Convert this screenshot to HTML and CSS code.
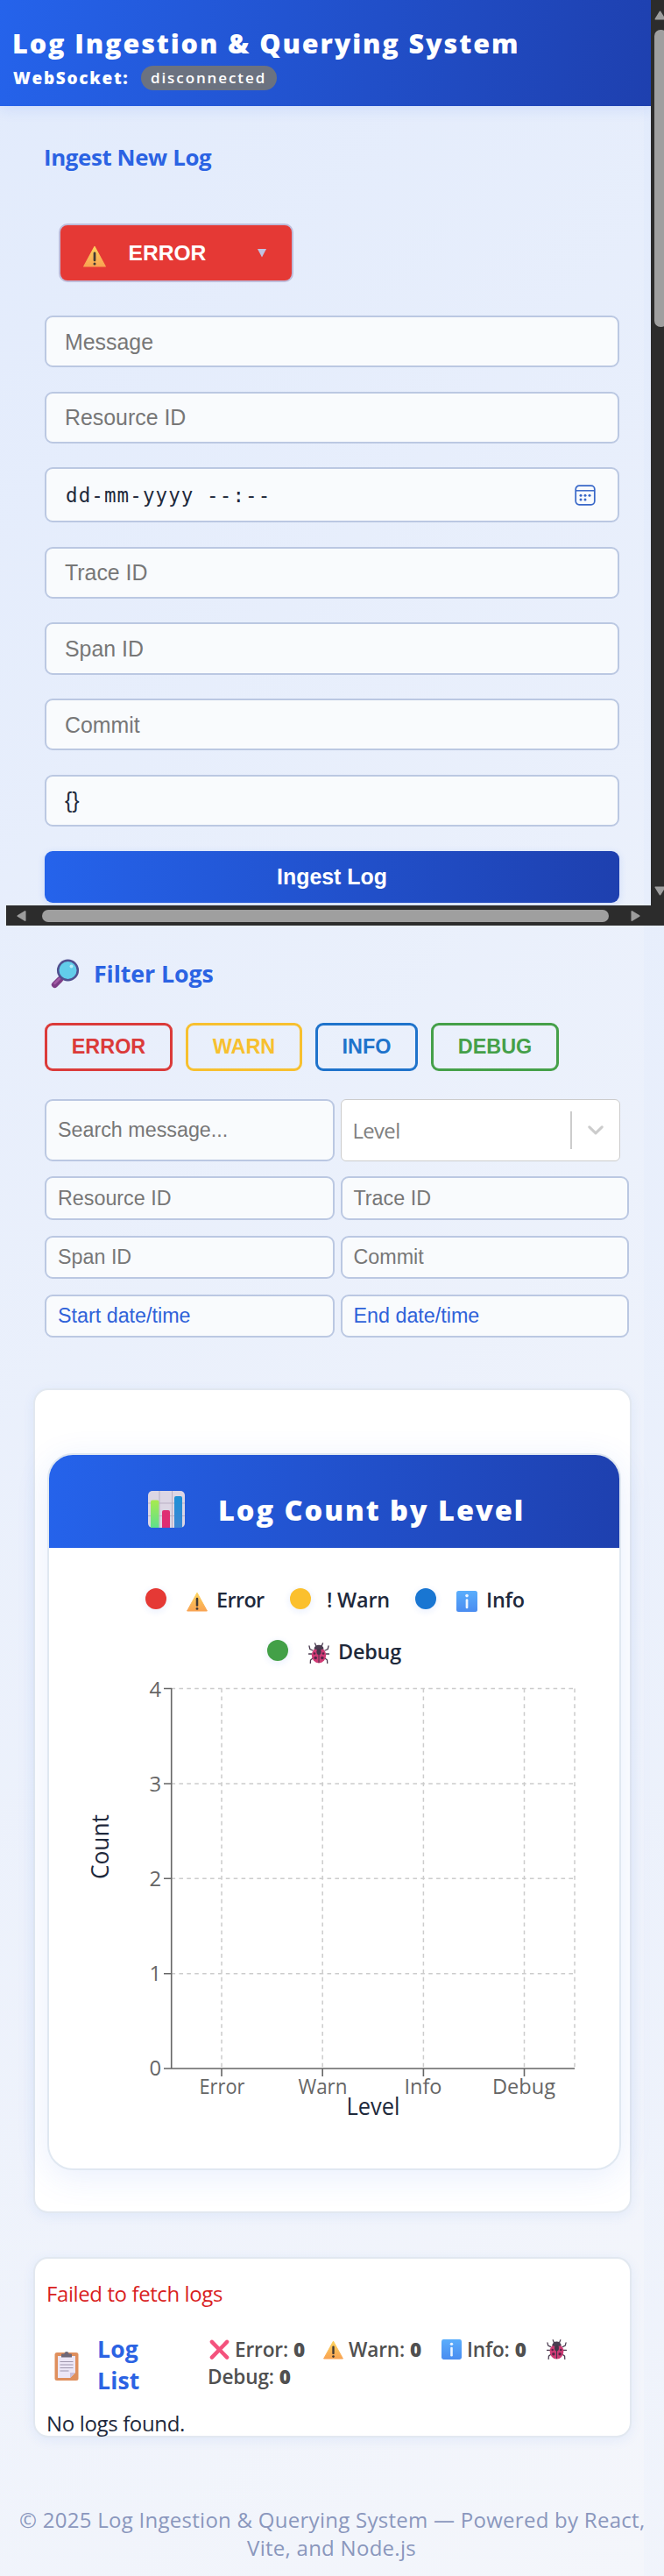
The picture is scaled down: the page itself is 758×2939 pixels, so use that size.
FILE: index.html
```html
<!DOCTYPE html>
<html lang="en">
<head>
<meta charset="utf-8">
<title>Log Ingestion &amp; Querying System</title>
<link rel="stylesheet" href="styles.css">
</head>
<body>
<svg class="defs" width="0" height="0">
  <defs>
    <linearGradient id="amber" x1="0" y1="0" x2="0" y2="1"><stop offset="0" stop-color="#fcd35c"/><stop offset="1" stop-color="#f9a352"/></linearGradient>
    <linearGradient id="green" x1="0" y1="0" x2="0" y2="1"><stop offset="0" stop-color="#a8ea4e"/><stop offset="1" stop-color="#5fe08c"/></linearGradient>
    <linearGradient id="sky" x1="0" y1="0" x2="0" y2="1"><stop offset="0" stop-color="#1d90d6"/><stop offset="1" stop-color="#3c86d4"/></linearGradient>
    <linearGradient id="info" x1="0" y1="0" x2="0" y2="1"><stop offset="0" stop-color="#5aaefc"/><stop offset="1" stop-color="#4a8cf0"/></linearGradient>
    <symbol id="i-warning" viewBox="0 0 24 24"><path d="M12 2.2 23.4 23H.6Z" fill="url(#amber)" stroke="url(#amber)" stroke-linejoin="round"/><path d="M12 9v7.6" stroke="#423a35" stroke-width="2.5" stroke-linecap="round"/><circle cx="12" cy="20.4" r="1.4" fill="#423a35"/></symbol>
    <symbol id="i-info" viewBox="0 0 24 24"><rect width="24" height="24" rx="2.5" fill="url(#info)"/><path d="M12 10.5v8.5" stroke="#edf5ff" stroke-width="2.7" stroke-linecap="round"/><circle cx="12" cy="5.6" r="1.8" fill="#edf5ff"/></symbol>
    <symbol id="i-bug" viewBox="0 0 24 24"><path d="M5 9 1.8 7.5 1 4M4 13H.5M5 18l-2.5 2-.2 3.5M19 9l3.200-1.500.8-3.500M20 13h3.500M19 18l2.500 2 .2 3.500M9 4.500 7.500.8M15 4.500 16.500.8" fill="none" stroke="#4a3c50" stroke-width="1.3" stroke-linecap="round"/><ellipse cx="12" cy="14.500" rx="8.200" ry="9" fill="#cf3a74"/><path d="M6.500 7.500a5.500 4.800 0 0 1 11 0Q12 8.800 6.500 7.500Z" fill="#4a3c50"/><ellipse cx="12" cy="10.500" rx="2.600" ry="3.600" fill="#42364a"/><path d="M12 9v14" stroke="#42364a" stroke-width="1"/><circle cx="7" cy="12.500" r="1.300" fill="#5b2449"/><circle cx="17" cy="12.500" r="1.300" fill="#5b2449"/><circle cx="8.200" cy="17.500" r="1.800" fill="#5b2449"/><circle cx="15.800" cy="17.500" r="1.800" fill="#5b2449"/></symbol>
    <symbol id="i-search" viewBox="0 0 34 34"><path d="m11.500 23.500-6 6" stroke="#7d3d86" stroke-width="7.200" stroke-linecap="round"/><path d="m11 22.500-5.500 5.500" stroke="#a15aa3" stroke-width="2.500" stroke-linecap="round"/><circle cx="20.500" cy="13" r="11.300" fill="#62cdea" stroke="#50508f" stroke-width="2.500"/><circle cx="24.500" cy="8.500" r="2" fill="#b5ecf8"/></symbol>
    <symbol id="i-chart" viewBox="0 0 42 42"><rect width="42" height="42" rx="5" fill="#dcd6e4"/><path d="M13 0v42M27.500 0v42M0 14h42M0 28.500h42" stroke="#b9b0c4" stroke-width="1"/><path d="M3 42V12.500a2 2 0 0 1 2-2h5.500a2 2 0 0 1 2 2V42Z" fill="url(#green)"/><path d="M16 42V24a2 2 0 0 1 2-2h5a2 2 0 0 1 2 2v18Z" fill="#df2d72"/><path d="M30 42V8a2 2 0 0 1 2-2h5a2 2 0 0 1 2 2v34Z" fill="url(#sky)"/></symbol>
    <symbol id="i-clipboard" viewBox="0 0 28 34"><rect x=".5" y="2" width="27" height="32" rx="2.500" fill="#df8f5d"/><path d="M4 6h20v19l-6 6H4Z" fill="#ece6f6"/><path d="m24 25-6 6v-6Z" fill="#c9bfdd"/><path d="M6.500 12.500h15M6.500 16h15M6.500 19.500h15M6.500 23h10" stroke="#9e96ad" stroke-width="1.200"/><path d="M8 7.500V4.500a1 1 0 0 1 1-1h2.500a2.500 2.500 0 0 1 5 0H19a1 1 0 0 1 1 1v3Z" fill="#6f6878"/></symbol>
    <symbol id="i-cross" viewBox="0 0 24 24"><path d="m3 3 18 18.500M21 3 3 21.500" stroke="#f4527d" stroke-width="4.600" stroke-linecap="round"/></symbol>
  </defs>
</svg>

<header class="header">
  <h1 class="title">Log Ingestion &amp; Querying System</h1>
  <div class="socket"><span class="socket-label">WebSocket:</span><span class="badge">disconnected</span></div>
</header>

<main class="main">
  <section class="ingest">
    <h2 class="heading heading-ingest">Ingest New Log</h2>
    <div class="level-select">
      <svg class="level-icon"><use href="#i-warning"/></svg>
      <span>ERROR</span>
      <svg class="level-caret" viewBox="0 0 10 10"><path d="M0 0h10L5 9.500Z" fill="#bfc3e2"/></svg>
    </div>
    <div class="form">
      <div class="field">Message</div>
      <div class="field">Resource ID</div>
      <div class="field date"><span>dd-mm-yyyy --:--</span>
        <svg class="calendar" viewBox="0 0 24 24"><rect x="1.200" y="1.200" width="21.600" height="21.600" rx="4" fill="none" stroke="#3867c8" stroke-width="1.700"/><path d="M1.500 6.800h21" stroke="#3867c8" stroke-width="1.500"/><g fill="#3867c8"><circle cx="7" cy="12.300" r="1.500"/><circle cx="12" cy="12.300" r="1.500"/><circle cx="17" cy="12.300" r="1.500"/><circle cx="7" cy="17" r="1.500"/><circle cx="12" cy="17" r="1.500"/></g></svg>
      </div>
      <div class="field">Trace ID</div>
      <div class="field">Span ID</div>
      <div class="field">Commit</div>
      <div class="field filled">{}</div>
      <div class="submit">Ingest Log</div>
    </div>
  </section>

  <section class="filters">
    <h2 class="heading heading-filter"><svg class="search-icon"><use href="#i-search"/></svg>Filter Logs</h2>
    <div class="levels">
      <span class="chip error">ERROR</span><span class="chip warn">WARN</span><span class="chip info">INFO</span><span class="chip debug">DEBUG</span>
    </div>
    <div class="filter-grid">
      <div class="field small">Search message...</div>
      <div class="dropdown"><span>Level</span><i class="divider"></i><svg class="chevron" viewBox="0 0 18 11"><path d="m1.800 1.800 7.200 7 7.200-7" fill="none" stroke="#ccc" stroke-width="3" stroke-linecap="round" stroke-linejoin="round"/></svg></div>
      <div class="field small">Resource ID</div><div class="field small">Trace ID</div>
      <div class="field small">Span ID</div><div class="field small">Commit</div>
      <div class="field small blue">Start date/time</div><div class="field small blue">End date/time</div>
    </div>
  </section>

  <section class="card chart-card">
    <div class="chart-box">
      <div class="chart-head"><svg class="chart-icon"><use href="#i-chart"/></svg><span>Log Count by Level</span></div>
      <div class="legend">
        <span class="item w1"><i class="dot d-error"></i><svg class="emoji"><use href="#i-warning"/></svg><span class="tight">Error</span></span>
        <span class="item w2"><i class="dot d-warn"></i><span>! Warn</span></span>
        <span class="item w3"><i class="dot d-info"></i><svg class="emoji"><use href="#i-info"/></svg><span>Info</span></span>
      </div>
      <div class="legend second">
        <span class="item"><i class="dot d-debug"></i><svg class="emoji"><use href="#i-bug"/></svg><span>Debug</span></span>
      </div>
      <svg class="plot" viewBox="56 1910 650 530" width="650" height="530">
        <g stroke="#ccc" stroke-width="1.500" stroke-dasharray="4.600 4.300" fill="none">
          <path d="M195.500 1926.500H656M195.500 2035H656M195.500 2143.300H656M195.500 2251.700H656"/>
          <path d="M253 1926.500V2360M368.200 1926.500V2360M483.400 1926.500V2360M598.500 1926.500V2360M656 1926.500V2360"/>
        </g>
        <path d="M195.700 1926V2360M187 2360H656M187 1926.500H196M187 2035H196M187 2143.300H196M187 2251.700H196M253 2360v9M368.200 2360v9M483.400 2360v9M598.500 2360v9" stroke="#666" stroke-width="1.600" fill="none"/>
        <g class="tick" text-anchor="end"><text x="184" y="1936">4</text><text x="184" y="2043.500">3</text><text x="184" y="2152">2</text><text x="184" y="2260">1</text><text x="184" y="2368">0</text></g>
        <g class="tick" text-anchor="middle">
          <text x="253.500" y="2389" textLength="52" lengthAdjust="spacingAndGlyphs">Error</text>
          <text x="368.500" y="2389" textLength="56" lengthAdjust="spacingAndGlyphs">Warn</text>
          <text x="483" y="2389" textLength="43" lengthAdjust="spacingAndGlyphs">Info</text>
          <text x="598" y="2389" textLength="72" lengthAdjust="spacingAndGlyphs">Debug</text>
        </g>
        <g class="axis" text-anchor="middle">
          <text x="426" y="2412.500" textLength="61" lengthAdjust="spacingAndGlyphs">Level</text>
          <text transform="translate(124 2107) rotate(-90)" textLength="74" lengthAdjust="spacingAndGlyphs">Count</text>
        </g>
      </svg>
    </div>
  </section>

  <section class="card list-card">
    <p class="failed">Failed to fetch logs</p>
    <div class="list-row">
      <svg class="clipboard"><use href="#i-clipboard"/></svg>
      <h2 class="list-title">Log<br>List</h2>
      <div class="stats">
        <div class="stat-line">
          <span class="stat s1"><svg class="emoji-sm"><use href="#i-cross"/></svg>Error: <b>0</b></span>
          <span class="stat s2"><svg class="emoji-sm"><use href="#i-warning"/></svg>Warn: <b>0</b></span>
          <span class="stat s3"><svg class="emoji-sm"><use href="#i-info"/></svg>Info: <b>0</b></span>
          <svg class="emoji-sm"><use href="#i-bug"/></svg>
        </div>
        <div class="stat-line second-line">Debug: <b>0</b></div>
      </div>
    </div>
    <p class="empty">No logs found.</p>
  </section>
</main>

<footer class="footer">© 2025 Log Ingestion &amp; Querying System — Powered by React,<br>Vite, and Node.js</footer>

<div class="vbar">
  <svg class="arrow-up" viewBox="0 0 13 12"><path d="M6.500 1.500 12 10.500H1Z" fill="#9d9d9d" stroke="#9d9d9d" stroke-width="2" stroke-linejoin="round"/></svg>
  <div class="vthumb"></div>
  <svg class="arrow-down" viewBox="0 0 13 12"><path d="M1 1.500h11L6.500 10.500Z" fill="#9d9d9d" stroke="#9d9d9d" stroke-width="2" stroke-linejoin="round"/></svg>
</div>
<div class="hbar">
  <svg class="arrow-side" viewBox="0 0 12 14"><path d="M10.500 1.500v11L1.500 7Z" fill="#9d9d9d" stroke="#9d9d9d" stroke-width="2" stroke-linejoin="round"/></svg>
  <div class="hthumb"></div>
  <svg class="arrow-side" viewBox="0 0 12 14"><path d="M1.500 1.500v11L10.500 7Z" fill="#9d9d9d" stroke="#9d9d9d" stroke-width="2" stroke-linejoin="round"/></svg>
</div>
</body>
</html>
```
FILE: styles.css
```css
* { box-sizing: border-box; }

body {
  position: relative;
  width: 758px;
  height: 2939px;
  margin: 0;
  overflow: hidden;
  font-family: "Open Sans", "Noto Sans", sans-serif;
  color: #1e293b;
  background: linear-gradient(135deg, #e2ebfc 0%, #f4f6fb 100%) 0 0 / 735px 2939px repeat-x;
}

.defs { position: absolute; }
svg { flex: none; display: block; }
h1, h2, p { margin: 0; }

/* Header */
.header {
  width: 743px;
  height: 121px;
  padding: 29px 0 0 14px;
  background: linear-gradient(100deg, #2563eb, #1e40af);
  box-shadow: 0 3px 16px rgba(37, 99, 235, .12);
  color: #fff;
}
.title { font-size: 30.500px; font-weight: 800; line-height: 40px; letter-spacing: 1.900px; white-space: nowrap; }
.socket { display: flex; align-items: center; height: 28px; margin: 6px 0 0 1px; }
.socket-label { width: 146px; font-size: 19px; font-weight: 800; letter-spacing: 1.7px; }
.badge {
  width: 155px;
  height: 28px;
  padding-left: 11px;
  border-radius: 14px;
  background: #6b7280;
  font-size: 17px;
  font-weight: 600;
  line-height: 28px;
  letter-spacing: 1.9px;
}

.main { padding: 40px 0 0 51px; }
.heading { color: #2b63e3; white-space: nowrap; }
.heading-ingest { font-size: 25.800px; font-weight: 700; line-height: 36px; letter-spacing: -.35px; margin-left: -1px; }

/* Ingest form */
.level-select {
  display: flex;
  align-items: center;
  width: 268px;
  height: 67px;
  margin: 58px 0 38px 15.500px;
  padding-left: 25px;
  border: 2px solid #bfbcd9;
  border-radius: 10px;
  background: #e53935;
  color: #fff;
  font: bold 24.6px/30px "Liberation Sans", Arial, sans-serif;
}
.level-icon { width: 28px; height: 26px; margin: 6px 25px 0 0; }
.level-select span { width: 147px; }
.level-caret { width: 10px; height: 10px; }

.form { display: flex; flex-direction: column; gap: 27.4px; width: 656px; }
.field {
  display: flex;
  align-items: center;
  height: 59.3px;
  padding-left: 21px;
  border: 2.4px solid #bbc8e2;
  border-radius: 9px;
  background: #f9fbfd;
  color: #777;
  font: 24.9px/30px "Liberation Sans", Arial, sans-serif;
  white-space: nowrap;
}
.date {
  justify-content: space-between;
  height: 63px;
  padding-left: 22px;
  padding-right: 25px;
  color: #1e293b;
  font: 22.5px/30px "DejaVu Sans Mono", monospace;
  letter-spacing: 1.1px;
}
.calendar { width: 24px; height: 24px; }
.filled { color: #1e293b; }
.submit {
  height: 59.3px;
  border-radius: 9px;
  background: linear-gradient(90deg, #2563eb, #1e40af);
  box-shadow: 0 2px 8px rgba(37, 99, 235, .15);
  color: #fff;
  font: bold 24.9px/59px "Liberation Sans", Arial, sans-serif;
  text-align: center;
}

/* Filters */
.filters { margin-top: 63px; }
.heading-filter { display: flex; align-items: center; height: 36px; padding-left: 6px; font-size: 26.800px; font-weight: 700; line-height: 36px; letter-spacing: -.1px; }
.search-icon { width: 34px; height: 34px; margin-right: 16px; }
.levels { display: flex; gap: 15px; margin-top: 38px; }
.chip {
  height: 55px;
  border: 3px solid;
  border-radius: 9px;
  font: bold 23.4px/49px "Liberation Sans", Arial, sans-serif;
  text-align: center;
}
.error { width: 146px; color: #db3b3a; }
.warn { width: 133px; color: #f7c02f; }
.info { width: 117px; color: #1f73cb; }
.debug { width: 146px; color: #45a049; }

.filter-grid {
  display: grid;
  grid-template-columns: 331px 329.500px;
  grid-template-rows: 71px 49.500px 49.500px 49.500px;
  column-gap: 6.500px;
  row-gap: 17.600px;
  margin-top: 32px;
}
.small { height: auto; padding-left: 13px; font-size: 23.3px; }
.blue { color: #2f62d9; }
.dropdown {
  display: flex;
  align-items: center;
  width: 319px;
  padding: 0 18px 0 13px;
  border: 1.600px solid #ccc;
  border-radius: 6px;
  background: #fff;
  color: #808080;
  font-size: 23.800px;
  letter-spacing: -.6px;
}
.dropdown span { flex: 1; padding-top: 2px; }
.divider { width: 1.500px; height: 43px; background: #ccc; }
.chevron { width: 18px; height: 11px; margin-left: 18px; }

/* Cards */
.card {
  width: 683px;
  margin-left: -13.500px;
  border: 2px solid #e2e8f0;
  border-radius: 17px;
  background: #fff;
  box-shadow: 0 3px 14px rgba(37, 99, 235, .08);
}
.chart-card { height: 941px; margin-top: 58px; padding: 72px 0 0 14.500px; }
.chart-box {
  width: 655px;
  height: 818px;
  overflow: hidden;
  border: 2px solid #e0e8f1;
  border-radius: 29px;
  background: #fff;
  box-shadow: 0 8px 38px rgba(37, 99, 235, .1);
}
.chart-head {
  display: flex;
  align-items: center;
  height: 106px;
  padding-left: 113px;
  background: linear-gradient(95deg, #2563eb, #1e40af);
  color: #fff;
  font-size: 32.500px;
  font-weight: 800;
  letter-spacing: 1.950px;
}
.chart-head span { padding-top: 18px; white-space: nowrap; }
.chart-icon { width: 42px; height: 42px; margin: 17px 38px 0 0; }

.legend { display: flex; height: 34px; margin: 41px 0 0 110px; font-size: 23.400px; font-weight: 600; line-height: 34px; }
.legend.second { margin: 25px 0 0 249px; }
.item { display: flex; align-items: center; letter-spacing: -.2px; white-space: nowrap; }
.item > span { padding-top: 1px; }
.w1 { width: 165px; }
.w2 { width: 143px; }
.dot { width: 24px; height: 24px; margin-right: 23px; border-radius: 50%; box-shadow: 0 2px 6px 2px rgba(37, 99, 235, .07); }
.w2 .dot { margin-right: 18px; }
.d-error { background: #e53935; }
.d-warn { background: #fbc02d; }
.d-info { background: #1976d2; }
.d-debug { background: #43a047; }
.emoji { width: 24px; height: 24px; margin: 6px 10px 0 0; }
.tight { letter-spacing: -.6px; }
.plot { margin-top: 10px; }
.tick { font-size: 23.800px; fill: #666; }
.axis { font-size: 27px; fill: #1e293b; }

/* Log list */
.list-card { height: 206px; margin-top: 49.500px; padding: 22px 0 0 13.500px; }
.failed { color: #d91f1f; font-size: 24px; line-height: 36px; letter-spacing: -.4px; }
.list-row { display: flex; height: 74px; margin-top: 28px; padding-left: 9px; }
.clipboard { width: 28px; height: 34px; margin: 19px 21px 0 0; }
.list-title { width: 126px; margin-top: -1px; color: #2b63e3; font-size: 26.500px; font-weight: 700; line-height: 36.500px; letter-spacing: .2px; }
.stats { padding-top: 2px; color: #505050; font-size: 22.600px; font-weight: 600; line-height: 31px; letter-spacing: -.15px; }
.stats b { font-weight: 800; }
.stat-line { display: flex; align-items: center; height: 31px; gap: 6px; white-space: nowrap; }
.stat { display: flex; align-items: center; gap: 6px; }
.s1 { width: 124px; }
.s2 { width: 129px; }
.s3 { width: 114px; }
.emoji-sm { width: 23px; height: 23px; }
.stat-line .emoji-sm { margin-left: 2px; }
.empty { margin-top: 10px; font-size: 24px; line-height: 36px; letter-spacing: -.35px; }

.footer {
  width: 735px;
  margin-top: 78px;
  padding-left: 22px;
  color: #8a97bd;
  font-size: 24px;
  line-height: 32.500px;
  letter-spacing: .27px;
  text-align: center;
  white-space: nowrap;
}

/* Scrollbars */
.vbar { position: absolute; top: 0; left: 743px; width: 15px; height: 1056px; padding: 12px 0 0 4px; overflow: hidden; background: #2c2c2c; }
.arrow-up, .arrow-down { width: 13px; height: 11px; }
.vthumb { width: 15px; height: 339px; margin: 11px 0 638px; border-radius: 7px; background: #9f9f9f; }
.hbar { position: absolute; top: 1033px; left: 7px; display: flex; align-items: center; width: 751px; height: 23px; padding-left: 12px; background: #2c2c2c; }
.arrow-side { width: 11px; height: 14px; }
.hthumb { width: 647px; height: 14px; margin: 0 25px 0 18px; border-radius: 7px; background: #9f9f9f; }
```
